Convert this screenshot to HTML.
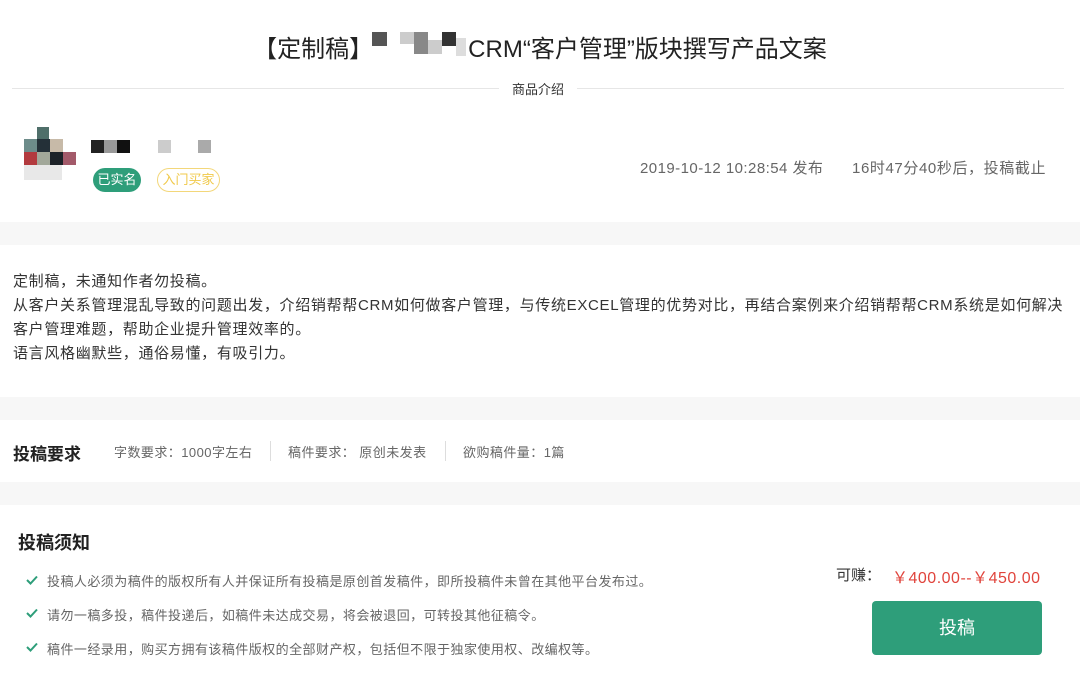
<!DOCTYPE html>
<html><head><meta charset="utf-8"><style>
*{margin:0;padding:0;box-sizing:border-box}
body{width:1080px;height:682px;background:#fff;font-family:"Liberation Sans","Noto Sans CJK SC",sans-serif;position:relative;overflow:hidden;color:#333}
.a{position:absolute;white-space:nowrap}
.band{position:absolute;left:0;width:1080px;background:#f7f7f7}
.b{position:absolute}
</style></head><body>
<div class="a" style="left:0;width:1080px;text-align:center;top:29px;font-size:24px;color:#222">【定制稿】<span style="display:inline-block;width:95px"></span>CRM“客户管理”版块撰写产品文案</div>
<div class="b" style="left:372px;top:32px;width:15px;height:14px;background:#555"></div>
<div class="b" style="left:400px;top:32px;width:14px;height:12px;background:#ccc"></div>
<div class="b" style="left:414px;top:32px;width:14px;height:22px;background:#888"></div>
<div class="b" style="left:428px;top:40px;width:14px;height:14px;background:#ccc"></div>
<div class="b" style="left:442px;top:32px;width:14px;height:14px;background:#333"></div>
<div class="b" style="left:456px;top:38px;width:10px;height:18px;background:#ddd"></div>
<div class="b" style="left:12px;top:88px;width:487px;height:1px;background:#e6e6e6"></div>
<div class="b" style="left:577px;top:88px;width:487px;height:1px;background:#e6e6e6"></div>
<div class="a" style="left:499px;width:78px;text-align:center;top:79px;font-size:13px;color:#333">商品介绍</div>
<div class="b" style="left:37px;top:127px;width:12px;height:12px;background:#4f6f6a"></div>
<div class="b" style="left:24px;top:139px;width:13px;height:13px;background:#6d8c8a"></div>
<div class="b" style="left:37px;top:139px;width:13px;height:13px;background:#243038"></div>
<div class="b" style="left:50px;top:139px;width:13px;height:13px;background:#c7baa8"></div>
<div class="b" style="left:24px;top:152px;width:13px;height:13px;background:#b23a3e"></div>
<div class="b" style="left:37px;top:152px;width:13px;height:13px;background:#a2a89a"></div>
<div class="b" style="left:50px;top:152px;width:13px;height:13px;background:#1c2228"></div>
<div class="b" style="left:63px;top:152px;width:13px;height:13px;background:#a35a6a"></div>
<div class="b" style="left:24px;top:165px;width:38px;height:15px;background:#e8e8e8"></div>
<div class="b" style="left:91px;top:140px;width:13px;height:13px;background:#222"></div>
<div class="b" style="left:104px;top:140px;width:13px;height:13px;background:#999"></div>
<div class="b" style="left:117px;top:140px;width:13px;height:13px;background:#111"></div>
<div class="b" style="left:158px;top:140px;width:13px;height:13px;background:#ccc"></div>
<div class="b" style="left:198px;top:140px;width:13px;height:13px;background:#aaa"></div>
<div class="a" style="left:93px;top:168px;width:48px;height:24px;border-radius:12px;background:#2e9e7a;color:#fff;font-size:13px;line-height:24px;text-align:center">已实名</div>
<div class="a" style="left:157px;top:168px;width:63px;height:24px;border-radius:12px;border:1px solid #f3d77a;color:#f0c94a;font-size:13px;line-height:22px;text-align:center">入门买家</div>
<div class="a" style="left:640px;top:157px;font-size:15px;color:#666;letter-spacing:0.45px">2019-10-12 10:28:54 发布</div>
<div class="a" style="left:852px;top:157px;font-size:15px;color:#666;letter-spacing:0.6px">16时47分40秒后，投稿截止</div>
<div class="band" style="top:222px;height:23px"></div>
<div class="a" style="left:13px;top:270px;font-size:15px;line-height:24px;color:#333;letter-spacing:0.68px">定制稿，未通知作者勿投稿。<br>从客户关系管理混乱导致的问题出发，介绍销帮帮CRM如何做客户管理，与传统EXCEL管理的优势对比，再结合案例来介绍销帮帮CRM系统是如何解决<br>客户管理难题，帮助企业提升管理效率的。<br>语言风格幽默些，通俗易懂，有吸引力。</div>
<div class="band" style="top:397px;height:23px"></div>
<div class="a" style="left:13px;top:440px;font-size:17px;font-weight:bold;color:#222">投稿要求</div>
<div class="a" style="left:114px;top:442px;font-size:13px;color:#666;letter-spacing:0.45px">字数要求：1000字左右</div>
<div class="b" style="left:270px;top:441px;width:1px;height:20px;background:#ddd"></div>
<div class="a" style="left:288px;top:442px;font-size:13px;color:#666;letter-spacing:0.45px">稿件要求：&nbsp;原创未发表</div>
<div class="b" style="left:445px;top:441px;width:1px;height:20px;background:#ddd"></div>
<div class="a" style="left:463px;top:442px;font-size:13px;color:#666;letter-spacing:0.45px">欲购稿件量：1篇</div>
<div class="band" style="top:482px;height:23px"></div>
<div class="a" style="left:18px;top:529px;font-size:18px;font-weight:bold;color:#222">投稿须知</div>
<svg class="b" style="left:26px;top:574px" width="12" height="12" viewBox="0 0 12 12"><path d="M1 6l3.5 3.5L11 2.5" stroke="#2e9e7a" stroke-width="2" fill="none"/></svg>
<svg class="b" style="left:26px;top:607px" width="12" height="12" viewBox="0 0 12 12"><path d="M1 6l3.5 3.5L11 2.5" stroke="#2e9e7a" stroke-width="2" fill="none"/></svg>
<svg class="b" style="left:26px;top:641px" width="12" height="12" viewBox="0 0 12 12"><path d="M1 6l3.5 3.5L11 2.5" stroke="#2e9e7a" stroke-width="2" fill="none"/></svg>
<div class="a" style="left:47px;top:571px;font-size:13px;color:#666;letter-spacing:0.45px">投稿人必须为稿件的版权所有人并保证所有投稿是原创首发稿件，即所投稿件未曾在其他平台发布过。</div>
<div class="a" style="left:47px;top:605px;font-size:13px;color:#666;letter-spacing:0.45px">请勿一稿多投，稿件投递后，如稿件未达成交易，将会被退回，可转投其他征稿令。</div>
<div class="a" style="left:47px;top:639px;font-size:13px;color:#666;letter-spacing:0.45px">稿件一经录用，购买方拥有该稿件版权的全部财产权，包括但不限于独家使用权、改编权等。</div>
<div class="a" style="left:836px;top:564px;font-size:15px;color:#333">可赚：</div>
<div class="a" style="left:892px;top:564px;font-size:16px;color:#e0443c;letter-spacing:0.5px">￥400.00--￥450.00</div>
<div class="a" style="left:872px;top:601px;width:170px;height:54px;border-radius:4px;background:#2e9e7a;color:#fff;font-size:18px;line-height:54px;text-align:center">投稿</div>
</body></html>
